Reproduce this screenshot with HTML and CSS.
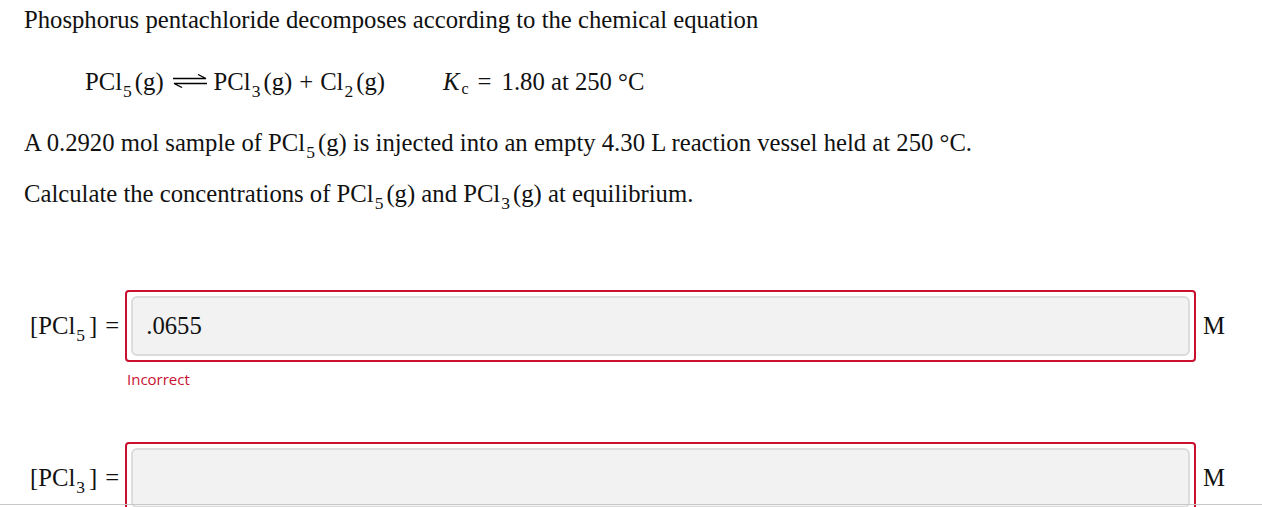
FILE: index.html
```html
<!DOCTYPE html>
<html lang="en">
<head>
<meta charset="utf-8">
<title>Equilibrium question</title>
<link rel="stylesheet" href="styles.css">
</head>
<body>
<div class="page">
  <p class="text intro">Phosphorus pentachloride decomposes according to the chemical equation</p>
  <div class="equation">
    <span class="reaction">PCl<sub>5</sub><span class="ph">(g)</span><svg class="arrow" width="36" height="14" viewBox="0 0 36 14" aria-hidden="true"><path d="M1 4.5H34M34 4.5L26 0.5" fill="none" stroke="#000" stroke-width="1.3"/><path d="M2 9.5H35M2 9.5L10 13.5" fill="none" stroke="#000" stroke-width="1.3"/></svg>PCl<sub>3</sub><span class="ph">(g)</span><span class="op">+</span>Cl<sub>2</sub><span class="ph">(g)</span></span>
    <span class="kc"><i>K</i><sub class="c">c</sub><span class="op">=</span>1.80 at 250 °C</span>
  </div>
  <p class="text sample">A 0.2920 mol sample of PCl<sub>5</sub><span class="ph">(g)</span> is injected into an empty 4.30 L reaction vessel held at 250 °C.</p>
  <p class="text calc">Calculate the concentrations of PCl<sub>5</sub><span class="ph">(g)</span> and PCl<sub>3</sub><span class="ph">(g)</span> at equilibrium.</p>

  <div class="answer first">
    <div class="answer-row">
      <span class="label">[PCl<sub>5</sub><span class="br">]</span><span class="eq">=</span></span>
      <div class="field incorrect"><div class="input">.0655</div></div>
      <span class="unit">M</span>
    </div>
    <div class="feedback">Incorrect</div>
  </div>

  <div class="answer second">
    <div class="answer-row">
      <span class="label">[PCl<sub>3</sub><span class="br">]</span><span class="eq">=</span></span>
      <div class="field incorrect"><div class="input"></div></div>
      <span class="unit">M</span>
    </div>
  </div>
</div>
<div class="edge"></div>
</body>
</html>
```

FILE: styles.css
```css
html, body {
  margin: 0;
  padding: 0;
  background: #fff;
}
body {
  font-family: "Liberation Serif", "Times New Roman", serif;
  font-size: 24.7px;
  color: #111;
}
.page {
  padding: 5px 0 0 24px;
}
.text {
  margin: 0;
  line-height: 30px;
}
sub {
  font-size: 17.5px;
  line-height: 0;
  vertical-align: -7px;
  margin-left: 1px;
}
.ph {
  margin-left: 3px;
}
.equation {
  display: flex;
  align-items: baseline;
  line-height: 30px;
  margin-top: 32px;
  padding-left: 61px;
}
.arrow {
  margin: 0 6px 0 8px;
  vertical-align: 2px;
}
.op {
  margin: 0 7px;
}
.kc {
  margin-left: 58px;
}
.kc i {
  font-style: italic;
}
.kc sub.c {
  font-size: 16px;
  vertical-align: -4px;
  margin-left: 2px;
}
.kc .op {
  margin: 0 10px 0 9px;
}
.sample {
  margin-top: 31px;
}
.calc {
  margin-top: 21px;
}
.answer.first {
  margin-top: 81px;
}
.answer.second {
  margin-top: 53px;
}
.answer-row {
  display: flex;
  align-items: center;
  padding: 0 37px 0 6px;
}
.label {
  white-space: nowrap;
  margin-right: 6px;
}
.label .br {
  margin-left: 4px;
}
.label .eq {
  margin-left: 8px;
}
.field {
  flex: 1;
  border: 2px solid #c9102e;
  border-radius: 4px;
  padding: 4px;
}
.input {
  height: 56px;
  background: #f2f2f2;
  border: 2px solid #dcdcdc;
  border-radius: 6px;
  display: flex;
  align-items: center;
  padding-left: 13px;
}
.unit {
  margin-left: 7px;
}
.feedback {
  font-family: "Open Sans", "Noto Sans", sans-serif;
  font-size: 15px;
  color: #c9102e;
  margin: 7px 0 0 103px;
  line-height: 20px;
}
.edge {
  position: fixed;
  left: 0;
  right: 0;
  bottom: 2px;
  height: 1px;
  background: #c8c8c8;
}
```
